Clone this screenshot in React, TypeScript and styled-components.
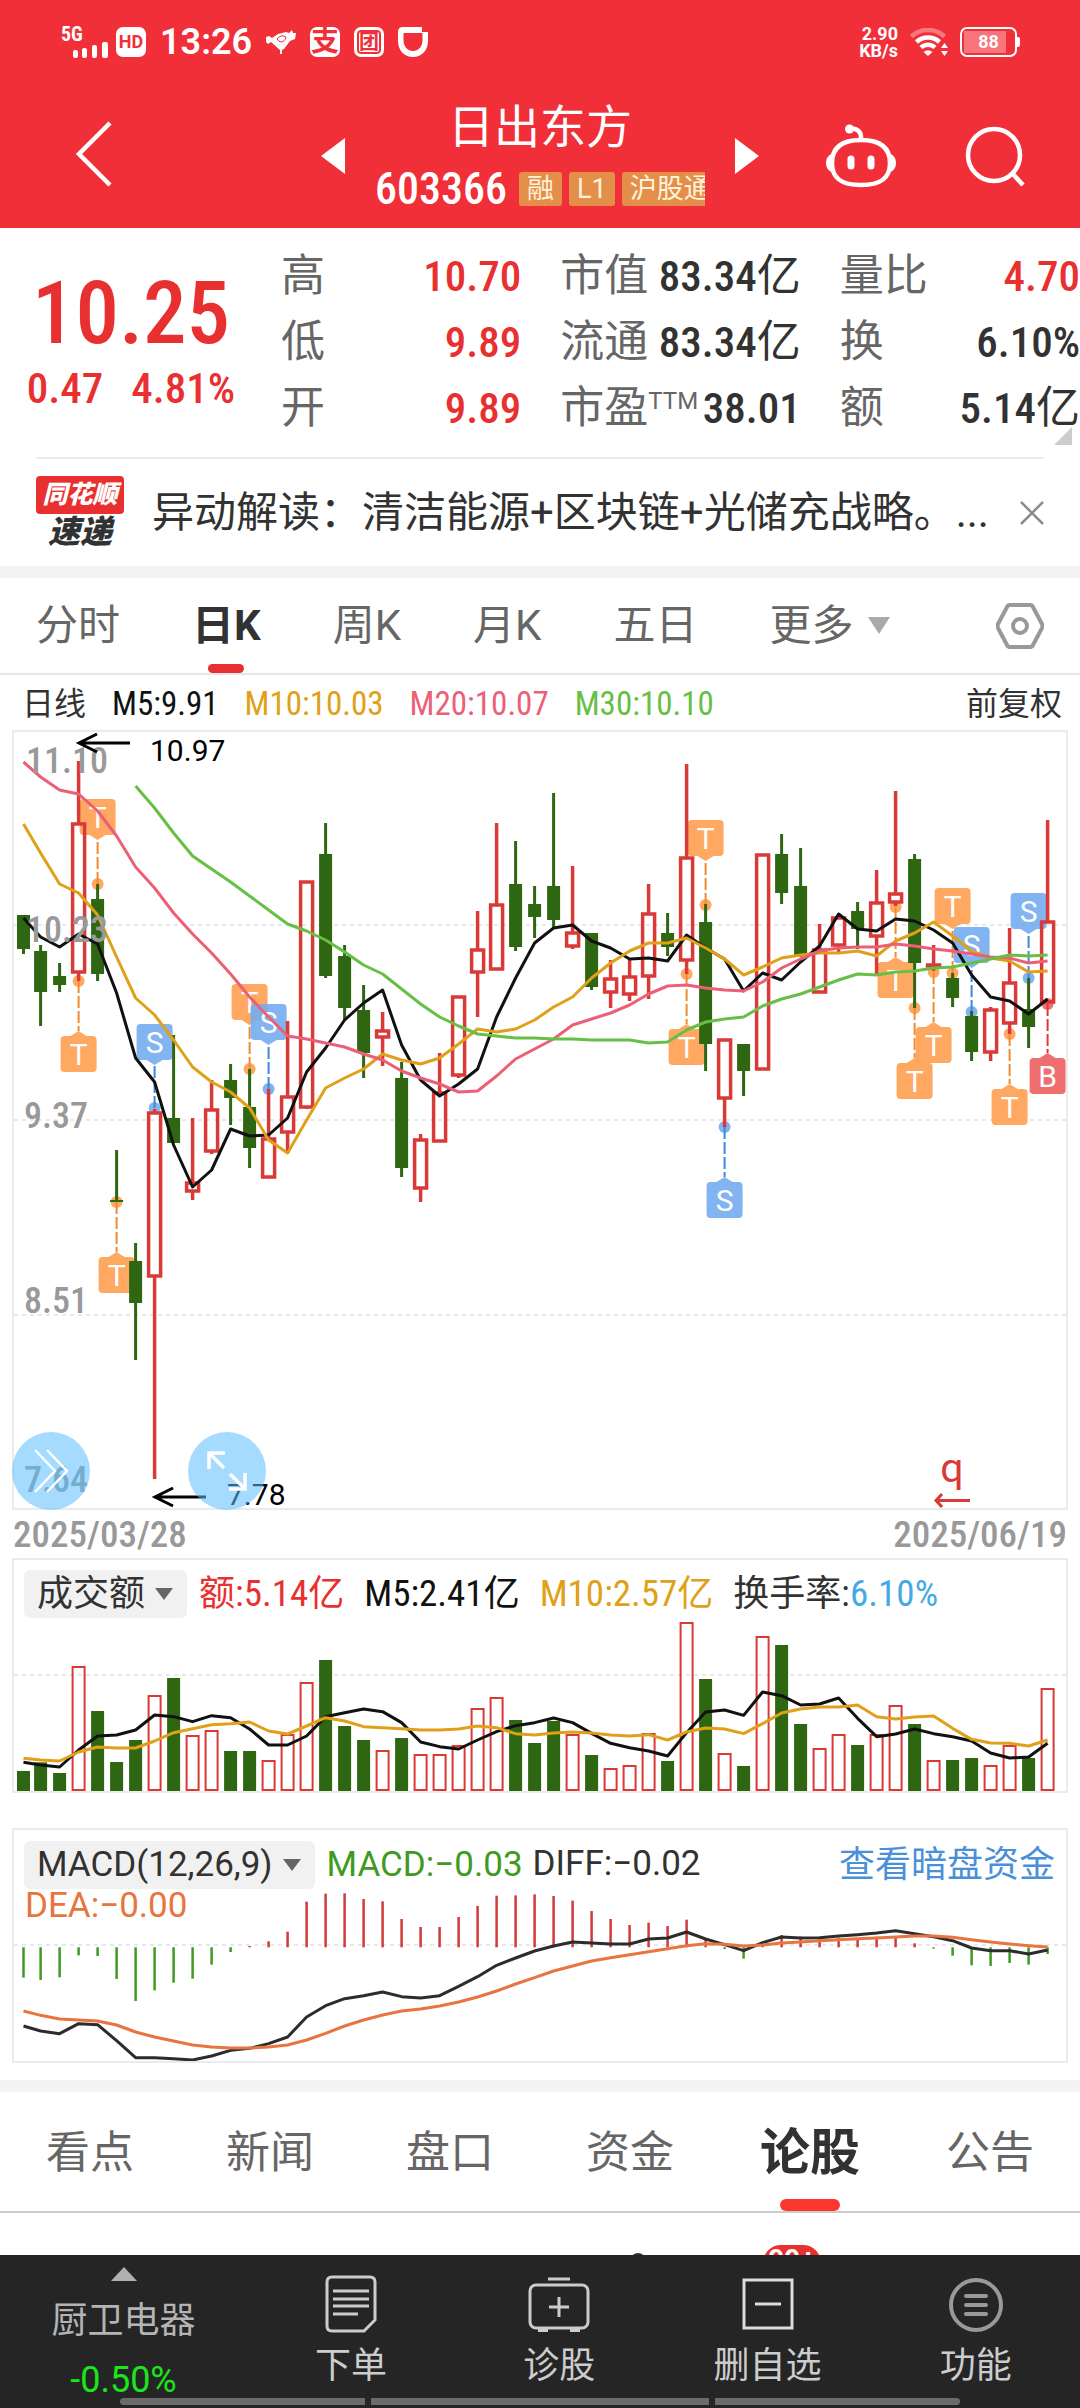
import React from "react";
import styled, { createGlobalStyle } from "styled-components";

const SANS = `Roboto, "Noto Sans CJK SC", sans-serif`;
const NUM = `"Roboto Condensed", Roboto, "Noto Sans CJK SC", sans-serif`;

const RED = "#e93030";
const INK = "#323232";
const GREY = "#666";
const UP = "#d93a38";
const DOWN = "#2f6612";

const GlobalStyle = createGlobalStyle`
  *, *::before, *::after { box-sizing: border-box; }
  body { margin: 0; background: #fff; font-family: ${SANS}; color: ${INK}; }
  button { border: 0; padding: 0; margin: 0; background: none; font: inherit; color: inherit; cursor: pointer; }
  h1, p, dl, dt, dd { margin: 0; font-weight: 400; }
  svg { display: block; }
`;

const Page = styled.div`
  display: flex;
  flex-direction: column;
  overflow: hidden;
`;

/* ---------- header ---------- */

const Header = styled.header`
  background: #f12f38;
  color: #fff;
`;

const StatusBar = styled.div`
  display: flex;
  justify-content: space-between;
  align-items: center;
  height: 84px;
  padding: 0 60px;
`;

const StatusGroup = styled.div<{ $gap: number }>`
  display: flex;
  align-items: center;
  gap: ${(p) => p.$gap}px;
`;

const Clock = styled.time`
  font-size: 36px;
  font-weight: 600;
  line-height: 40px;
`;

const Chip = styled.span<{ $size: number }>`
  display: flex;
  align-items: center;
  justify-content: center;
  width: 30px;
  height: 30px;
  border-radius: 7px;
  background: #fff;
  color: #f12f38;
  font-size: ${(p) => p.$size}px;
  font-weight: 700;
  line-height: 30px;
`;

const FrameChip = styled(Chip)`
  border: 3px solid #fff;
  box-shadow: inset 0 0 0 2px #f12f38;
`;

const Speed = styled.span`
  display: flex;
  flex-direction: column;
  align-items: flex-end;
  font-size: 18px;
  font-weight: 700;
  line-height: 17px;
`;

const Battery = styled.span`
  display: flex;
  align-items: center;
  justify-content: center;
  width: 57px;
  height: 30px;
  padding: 2px;
  border: 2px solid #fff;
  border-radius: 7px;
`;

const BatteryFill = styled.span`
  flex: 1;
  height: 100%;
  background: linear-gradient(to right, #f8767b 86%, transparent 86%);
  font-size: 18px;
  font-weight: 700;
  line-height: 22px;
  text-align: center;
`;

const BatteryTip = styled.span`
  width: 3px;
  height: 10px;
  border-radius: 0 2px 2px 0;
  background: #fff;
`;

const TitleBar = styled.div`
  display: grid;
  grid-template-columns: 1fr auto 1fr;
  align-items: center;
  height: 144px;
  padding: 0 55px 0 72px;
`;

const TitleActions = styled.div`
  display: flex;
  justify-content: flex-end;
  align-items: center;
  gap: 67px;
`;

const Switcher = styled.div`
  display: flex;
  align-items: center;
  gap: 30px;
  margin-right: 17px;
`;

const Title = styled.div`
  display: flex;
  flex-direction: column;
  align-items: center;
  gap: 6px;
  width: 330px;
`;

const Name = styled.h1`
  font-size: 46px;
  line-height: 60px;
`;

const CodeRow = styled.div`
  display: flex;
  align-items: center;
  align-self: stretch;
  gap: 7px;
  height: 52px;
  overflow: hidden;
`;

const Code = styled.span`
  margin-right: 5px;
  font-family: ${NUM};
  font-size: 44px;
  font-weight: 500;
  line-height: 52px;
`;

const Tag = styled.span`
  flex: none;
  padding: 0 8px;
  border-radius: 3px;
  background: #e38f4a;
  color: #fff3dc;
  font-size: 27px;
  line-height: 34px;
`;

/* ---------- quote ---------- */

const Quote = styled.section`
  position: relative;
  display: grid;
  grid-template-columns: 242px 1fr 1fr 1fr;
  column-gap: 39px;
  padding: 15px 0 16px;
`;

const PriceBlock = styled.div`
  display: flex;
  flex-direction: column;
  align-items: center;
  justify-content: center;
  padding-left: 20px;
  color: ${RED};
  font-family: ${NUM};
  font-weight: 500;
`;

const Price = styled.span`
  font-size: 87px;
  line-height: 92px;
`;

const Change = styled.span`
  display: flex;
  gap: 28px;
  font-size: 43px;
  line-height: 58px;
`;

const Stats = styled.dl``;

const Stat = styled.div`
  display: flex;
  justify-content: space-between;
  align-items: center;
  height: 66px;
  white-space: nowrap;
`;

const StatName = styled.dt`
  display: flex;
  color: ${GREY};
  font-size: 44px;
  line-height: 66px;
`;

const Sup = styled.span`
  font-size: 24px;
  line-height: 52px;
`;

const StatValue = styled.dd<{ $up?: boolean }>`
  color: ${(p) => (p.$up ? RED : INK)};
  font-family: ${NUM};
  font-size: 43px;
  font-weight: 500;
  line-height: 66px;
`;

const Unit = styled.span`
  font-size: 44px;
  font-weight: 400;
`;

const Corner = styled.span`
  position: absolute;
  right: 8px;
  bottom: 12px;
  border-bottom: 18px solid #ccc;
  border-left: 18px solid transparent;
`;

const News = styled.section`
  display: flex;
  align-items: center;
  height: 109px;
  margin: 0 36px;
  border-top: 2px solid #ececec;
`;

const Brand = styled.div`
  display: flex;
  flex-direction: column;
  align-items: center;
  flex: none;
  width: 88px;
  margin-right: 28px;
  font-style: italic;
  font-weight: 900;
`;

const BrandTop = styled.span`
  align-self: stretch;
  border-radius: 4px;
  background: ${RED};
  color: #fff;
  font-size: 25px;
  line-height: 38px;
  text-align: center;
`;

const BrandBottom = styled.span`
  font-size: 32px;
  line-height: 36px;
`;

const NewsText = styled.p`
  flex: 1;
  font-size: 42px;
  line-height: 60px;
  white-space: nowrap;
`;

const Band = styled.div`
  height: 12px;
  background: #f4f4f4;
`;

/* ---------- period tabs ---------- */

const PeriodTabs = styled.nav`
  display: flex;
  align-items: stretch;
  justify-content: space-between;
  height: 97px;
  padding: 0 36px;
  border-bottom: 2px solid #e6e6e6;
`;

const PeriodList = styled.div`
  display: flex;
  gap: 72px;
`;

const Period = styled.button<{ $active?: boolean }>`
  display: flex;
  align-items: center;
  gap: 15px;
  position: relative;
  color: ${(p) => (p.$active ? INK : GREY)};
  font-size: 42px;
  font-weight: ${(p) => (p.$active ? 700 : 400)};
  line-height: 60px;

  &::after {
    content: "";
    display: ${(p) => (p.$active ? "block" : "none")};
    position: absolute;
    left: calc(50% - 18px);
    bottom: 0;
    width: 36px;
    height: 9px;
    border-radius: 5px;
    background: ${RED};
  }
`;

const Caret = styled.span<{ $w: number; $h: number; $color: string }>`
  border-top: ${(p) => p.$h}px solid ${(p) => p.$color};
  border-left: ${(p) => p.$w / 2}px solid transparent;
  border-right: ${(p) => p.$w / 2}px solid transparent;
`;

/* ---------- charts ---------- */

const Averages = styled.div`
  display: flex;
  align-items: center;
  gap: 26px;
  height: 55px;
  padding: 2px 18px 0 22px;
  font-size: 32px;
  line-height: 40px;
`;

const Tone = styled.span<{ $color: string }>`
  color: ${(p) => p.$color};
`;

const Average = styled(Tone)`
  font-family: ${NUM};
  font-size: 33px;
`;

const PriceMode = styled.button`
  margin-left: auto;
`;

const Panel = styled.div`
  display: grid;
  margin: 0 12px;
  border: 2px solid #ebebeb;

  & > * { grid-area: 1 / 1; min-width: 0; }
`;

const Plot = styled.svg`
  width: 100%;
  height: auto;
`;

const AxisText = styled.text`
  fill: #999;
  font-family: ${NUM};
  font-size: 36px;
  font-weight: 500;
`;

const NoteText = styled.text`
  fill: #000;
  font-family: ${SANS};
  font-size: 30px;
`;

const MarkText = styled.text`
  fill: #fff;
  font-family: ${SANS};
  font-size: 30px;
  text-anchor: middle;
`;

const ExText = styled.text`
  fill: ${UP};
  font-family: ${SANS};
  font-size: 41px;
  text-anchor: middle;
`;

const FloatTools = styled.div`
  z-index: 1;
  align-self: end;
  justify-self: start;
  display: flex;
  gap: 98px;
  margin: 0 0 -2px -2px;
`;

const RoundButton = styled.button`
  display: flex;
  align-items: center;
  justify-content: center;
  width: 78px;
  height: 78px;
  border-radius: 50%;
  background: rgba(86, 188, 255, 0.54);
`;

const Dates = styled.div`
  display: flex;
  justify-content: space-between;
  height: 48px;
  padding: 0 13px;
  color: #999;
  font-family: ${NUM};
  font-size: 37px;
  font-weight: 500;
  line-height: 50px;
`;

const Legend = styled.div`
  z-index: 1;
  display: flex;
  align-self: start;
  align-items: center;
  flex-wrap: wrap;
  column-gap: 12px;
  padding: 10px 11px 0 10px;
  font-size: 36px;
  line-height: 48px;
`;

const Picker = styled.button`
  display: flex;
  align-items: center;
  gap: 10px;
  height: 48px;
  padding: 0 14px 0 13px;
  border-radius: 6px;
  background: #f1f1f1;
`;

const Readings = styled.div<{ $gap: number }>`
  display: flex;
  gap: ${(p) => p.$gap}px;
`;

const Num = styled.span`
  font-family: ${NUM};
  font-size: 37px;
`;

const LatinNum = styled.span`
  font-size: 35px;
`;

const DarkPoolLink = styled.a`
  margin-left: auto;
  color: #4a90d9;
  text-decoration: none;
`;

const SecondLine = styled.div`
  flex-basis: 100%;
  padding-left: 1px;
  line-height: 32px;
`;

const Gap = styled.div`
  height: 35px;
`;

const SmallGap = styled.div`
  height: 17px;
`;

/* ---------- content tabs ---------- */

const ContentTabs = styled.nav`
  display: grid;
  grid-template-columns: repeat(6, 1fr);
  height: 121px;
  border-bottom: 2px solid #ccc;
`;

const ContentTab = styled.button<{ $active?: boolean }>`
  position: relative;
  padding-top: 2px;
  color: ${(p) => (p.$active ? INK : GREY)};
  font-size: ${(p) => (p.$active ? 50 : 44)}px;
  font-weight: ${(p) => (p.$active ? 700 : 400)};
  line-height: 60px;

  &::after {
    content: "";
    display: ${(p) => (p.$active ? "block" : "none")};
    position: absolute;
    left: calc(50% - 30px);
    bottom: 0;
    width: 60px;
    height: 12px;
    border-radius: 6px;
    background: #fb3830;
  }
`;

const Peek = styled.div`
  display: flex;
  justify-content: flex-end;
  align-items: flex-start;
  gap: 117px;
  height: 42px;
  padding: 32px 259px 0 0;
  overflow: hidden;
`;

const PeekDot = styled.span`
  width: 16px;
  height: 16px;
  margin-top: 8px;
  border-radius: 50%;
  background: ${INK};
`;

const Badge = styled.span`
  width: 58px;
  height: 36px;
  border-radius: 18px;
  background: ${RED};
  color: #fff;
  font-size: 28px;
  font-weight: 700;
  line-height: 30px;
  text-align: center;
`;

const BottomBar = styled.nav`
  position: relative;
  display: grid;
  grid-template-columns: 247px repeat(4, 1fr);
  height: 153px;
  background: #252525;
  color: #ccc;
  font-size: 36px;
`;

const Sector = styled.button`
  display: flex;
  flex-direction: column;
  align-items: center;
  padding-top: 12px;
`;

const SectorName = styled.span`
  margin: 17px 0 13px;
  color: #b4b4b4;
  line-height: 46px;
`;

const SectorChange = styled.span`
  color: #1be61b;
  font-size: 36px;
  line-height: 46px;
`;

const Action = styled.button`
  display: flex;
  flex-direction: column;
  align-items: center;
  gap: 10px;
  padding-top: 20px;
  line-height: 46px;
`;

const Gesture = styled.div`
  position: absolute;
  left: 120px;
  right: 120px;
  bottom: 3px;
  display: grid;
  grid-template-columns: 245fr 338fr 245fr;
  gap: 6px;
  height: 7px;
  border-radius: 4px;
  overflow: hidden;
`;

const GestureBit = styled.span`
  background: #6b6b6b;
`;

/* ---------- chart data ---------- */

// [direction, high, open/close top, open/close bottom, low]
type Candle = ["u" | "d", number, number, number, number];

const candles: Candle[] = [
  ["d", 915, 915, 949, 954], ["d", 945, 951, 992, 1026], ["d", 963, 976, 985, 992],
  ["u", 761, 823, 972, 981], ["d", 884, 899, 974, 981], ["d", 1150, 1200, 1202, 1202],
  ["d", 1243, 1261, 1303, 1360], ["u", 1109, 1112, 1276, 1479], ["d", 1035, 1118, 1143, 1143],
  ["u", 1118, 1182, 1191, 1200], ["u", 1080, 1109, 1151, 1154], ["d", 1064, 1080, 1098, 1125],
  ["d", 1069, 1107, 1148, 1168], ["u", 1089, 1138, 1177, 1177], ["u", 1021, 1096, 1132, 1153],
  ["u", 881, 881, 1107, 1109], ["d", 823, 854, 976, 978], ["d", 945, 956, 1008, 1021],
  ["d", 985, 1010, 1053, 1078], ["u", 1012, 1030, 1037, 1066], ["d", 1062, 1078, 1168, 1177],
  ["u", 1134, 1139, 1188, 1202], ["u", 1053, 1092, 1141, 1141], ["u", 996, 996, 1075, 1078],
  ["u", 911, 949, 972, 1017], ["u", 823, 904, 969, 969], ["d", 841, 884, 947, 951],
  ["d", 886, 904, 917, 938], ["d", 793, 886, 920, 927], ["u", 866, 932, 946, 949],
  ["d", 933, 933, 987, 990], ["u", 960, 978, 992, 1008], ["u", 958, 976, 994, 1001],
  ["u", 884, 913, 976, 999], ["d", 913, 933, 947, 956], ["u", 764, 857, 960, 974],
  ["d", 904, 922, 1044, 1071], ["u", 1039, 1039, 1098, 1127], ["d", 1044, 1044, 1071, 1096],
  ["u", 854, 854, 1069, 1069], ["d", 834, 854, 893, 904], ["d", 848, 886, 955, 957],
  ["u", 924, 949, 992, 992], ["u", 914, 917, 945, 952], ["d", 902, 911, 929, 949],
  ["u", 870, 902, 936, 974], ["u", 791, 893, 902, 906], ["d", 854, 859, 963, 1008],
  ["u", 945, 964, 965, 971], ["d", 973, 978, 998, 1007], ["d", 1011, 1016, 1052, 1061],
  ["u", 1007, 1009, 1052, 1061], ["u", 928, 982, 1023, 1034], ["d", 978, 1009, 1027, 1048],
  ["u", 820, 921, 1002, 1002],
];

const ma5 = [918, 937, 947, 934, 944, 993, 1058, 1082, 1145, 1187, 1170, 1129, 1136, 1135, 1118, 1072, 1048, 1020, 1003, 990, 1045, 1080, 1096, 1084, 1069, 1017, 978, 943, 928, 925, 941, 948, 959, 958, 961, 935, 948, 959, 991, 973, 980, 962, 946, 914, 929, 931, 919, 921, 930, 943, 975, 997, 1001, 1014, 999];
const ma10 = [824, 853, 884, 893, 915, 957, 998, 1015, 1040, 1067, 1082, 1092, 1108, 1140, 1153, 1120, 1088, 1078, 1069, 1054, 1060, 1064, 1058, 1044, 1029, 1032, 1029, 1020, 1007, 997, 978, 963, 951, 943, 943, 938, 948, 959, 975, 967, 958, 955, 953, 953, 951, 956, 941, 933, 922, 936, 951, 958, 961, 972, 971];
const ma20 = [762, 777, 790, 794, 811, 836, 867, 888, 913, 934, 953, 974, 997, 1017, 1036, 1039, 1043, 1047, 1054, 1060, 1071, 1078, 1084, 1092, 1091, 1076, 1059, 1049, 1039, 1025, 1019, 1013, 1005, 994, 986, 985, 988, 990, 991, 982, 968, 959, 951, 948, 947, 947, 944, 946, 949, 951, 954, 957, 958, 963, 961];
const ma30 = [786, 808, 833, 856, 869, 882, 896, 910, 924, 931, 940, 952, 965, 974, 989, 1004, 1017, 1026, 1034, 1036, 1038, 1038, 1039, 1039, 1040, 1040, 1040, 1043, 1042, 1030, 1022, 1019, 1017, 1006, 999, 994, 987, 980, 974, 975, 972, 971, 968, 967, 963, 959, 955, 956, 955];

// Volume and MACD series are on a scale of three units to a pixel.
const volume = [663, 637, 669, 348, 483, 636, 570, 435, 384, 555, 540, 603, 603, 630, 552, 396, 330, 528, 570, 600, 564, 612, 612, 585, 474, 441, 510, 579, 513, 552, 615, 654, 645, 549, 633, 216, 387, 609, 648, 258, 285, 522, 594, 552, 585, 552, 465, 522, 630, 630, 624, 645, 585, 624, 414];
const vol5 = [637, 645, 651, 600, 558, 555, 540, 495, 500, 515, 497, 503, 537, 585, 585, 558, 500, 488, 477, 485, 518, 576, 590, 597, 570, 545, 527, 518, 504, 518, 550, 580, 593, 603, 618, 548, 486, 480, 496, 426, 437, 465, 462, 444, 505, 560, 552, 537, 551, 560, 573, 609, 624, 621, 580];
const vol10 = [625, 630, 633, 606, 591, 594, 594, 573, 548, 536, 524, 521, 516, 543, 552, 528, 503, 513, 530, 533, 536, 540, 540, 537, 528, 533, 551, 555, 549, 546, 549, 555, 558, 554, 570, 546, 534, 537, 551, 521, 489, 477, 471, 471, 465, 500, 507, 501, 498, 535, 568, 579, 580, 588, 570];
const macd = [473, 480, 472, 406, 408, 477, 543, 511, 488, 476, 434, 396, 378, 364, 335, 245, 221, 220, 237, 244, 297, 321, 321, 291, 258, 227, 226, 223, 228, 242, 273, 297, 315, 308, 318, 299, 357, 387, 416, 378, 345, 350, 352, 353, 355, 350, 352, 370, 386, 407, 436, 438, 429, 434, 402];
const diff = [618, 633, 641, 611, 614, 662, 713, 713, 716, 720, 708, 691, 685, 671, 651, 591, 557, 536, 527, 516, 530, 534, 527, 499, 470, 436, 414, 393, 378, 366, 369, 372, 372, 357, 354, 336, 357, 374, 392, 368, 351, 354, 353, 348, 344, 339, 332, 341, 350, 362, 384, 392, 392, 402, 390];
const dea = [573, 586, 597, 600, 603, 615, 636, 651, 663, 675, 681, 684, 684, 681, 675, 660, 640, 618, 600, 585, 573, 567, 558, 546, 531, 513, 492, 473, 453, 438, 423, 413, 404, 395, 386, 377, 371, 373, 378, 375, 369, 366, 362, 359, 356, 354, 351, 348, 348, 352, 359, 366, 372, 377, 381];

// [letter, candle index, top of the label, y of the dot]
type Mark = ["T" | "S" | "B", number, number, number];

const marks: Mark[] = [
  ["T", 4, 799, 884], ["T", 3, 1036, 981], ["S", 7, 1024, 1108], ["T", 5, 1257, 1202],
  ["T", 12, 984, 1069], ["S", 13, 1004, 1089], ["T", 36, 820, 905], ["T", 35, 1029, 974],
  ["S", 37, 1182, 1127], ["T", 46, 962, 907], ["T", 47, 1063, 1008], ["T", 48, 1027, 972],
  ["T", 49, 888, 973], ["S", 50, 927, 1012], ["T", 52, 1089, 1034], ["S", 53, 893, 978],
  ["B", 54, 1058, 1004],
];

const markFill = { T: "#ff9f50", S: "#74acf0", B: "#ee6062" };
const markLine = { T: "#f08a33", S: "#3f87d9", B: "#d93a38" };

const xAt = (i: number) => (i === 0 ? 23.5 : 21.6 + 19 * i);

const points = (ys: number[], from = 0, y = (v: number) => v) =>
  ys.map((v, i) => `${xAt(i + from)},${y(v)}`).join(" ");

const Line = ({ pts, color, width = 3 }: { pts: string; color: string; width?: number }) => (
  <polyline points={pts} fill="none" stroke={color} strokeWidth={width} strokeLinejoin="round" />
);

const GridLine = ({ y }: { y: number }) => (
  <line x1="14" x2="1066" y1={y} y2={y} stroke="#e9e9e9" strokeWidth="2" strokeDasharray="4 4" />
);

const MarkShape = ({ mark }: { mark: Mark }) => {
  const [letter, index, top, dot] = mark;
  const x = xAt(index);
  const below = top > dot;
  const edge = below ? top : top + 36;
  const tip = below ? top - 5 : top + 41;
  return (
    <g>
      <g opacity="0.9" fill={markFill[letter]}>
        <circle cx={x} cy={dot} r="6" />
        <rect x={x - 18} y={top} width="36" height="36" rx="4" />
        <path d={`M${x - 8} ${edge}L${x} ${tip}L${x + 8} ${edge}z`} />
      </g>
      <line x1={x} x2={x} y1={dot} y2={tip} stroke={markLine[letter]} strokeWidth="2" strokeDasharray="12 3" />
      <MarkText x={x} y={top + 29}>{letter}</MarkText>
    </g>
  );
};

const CandleShape = ({ candle, index }: { candle: Candle; index: number }) => {
  const [dir, high, top, bottom, low] = candle;
  const x = xAt(index);
  if (dir === "d") {
    return (
      <g fill={DOWN}>
        <rect x={x - 1.5} y={high} width="3" height={low - high} />
        <rect x={x - 6.5} y={top} width="13" height={bottom - top} />
      </g>
    );
  }
  return (
    <g stroke={UP} strokeWidth="3.500" fill="none">
      <path d={`M${x} ${high}V${top}M${x} ${bottom}V${low}`} />
      <rect x={x - 6} y={top + 1} width="12" height={Math.max(bottom - top - 1, 1)} />
    </g>
  );
};

const Arrow = ({ x, y }: { x: number; y: number }) => (
  <path d={`M${x + 51} ${y}H${x}M${x + 18} ${y - 9}L${x} ${y}L${x + 18} ${y + 9}`} fill="none" stroke="#000" strokeWidth="3" />
);

const KLineChart = () => (
  <Plot viewBox="14 732 1052 776" role="img" aria-label="日K线图">
    {[925, 1120, 1315].map((y) => <GridLine key={y} y={y} />)}
    {marks.map((m, i) => <MarkShape key={i} mark={m} />)}
    {candles.map((c, i) => <CandleShape key={i} candle={c} index={i} />)}
    <Line pts={points(ma5)} color="#111" />
    <Line pts={points(ma10)} color="#e0a019" />
    <Line pts={points(ma20)} color="#ec6077" />
    <Line pts={points(ma30, 6)} color="#67bf45" />
    <AxisText x="26" y="773">11.10</AxisText>
    <AxisText x="26" y="942">10.23</AxisText>
    <AxisText x="24" y="1128">9.37</AxisText>
    <AxisText x="24" y="1313">8.51</AxisText>
    <AxisText x="24" y="1492">7.64</AxisText>
    <Arrow x={79} y={743} />
    <NoteText x="150" y="761">10.97</NoteText>
    <Arrow x={155} y={1497} />
    <NoteText x="227" y="1505">7.78</NoteText>
    <ExText x="952" y="1482">q</ExText>
    <path d="M970 1500.500H936M942 1494L936 1500.500L942 1507" fill="none" stroke={UP} strokeWidth="3" />
  </Plot>
);

const volY = (v: number) => 1550 + v / 3;

const VolumeChart = () => (
  <Plot viewBox="14 1560 1052 231" role="img" aria-label="成交额">
    <GridLine y={1675} />
    {volume.map((v, i) => {
      const y = volY(v);
      return candles[i][0] === "d" ? (
        <rect key={i} x={xAt(i) - 6.5} y={y} width="13" height={1791 - y} fill={DOWN} />
      ) : (
        <rect key={i} x={xAt(i) - 6} y={y + 1} width="12" height={1789 - y} fill="none" stroke={UP} strokeWidth="2" />
      );
    })}
    <Line pts={points(vol5, 0, volY)} color="#111" />
    <Line pts={points(vol10, 0, volY)} color="#e0a019" />
  </Plot>
);

const macdY = (v: number) => 1820 + v / 3;

const MacdChart = () => (
  <Plot viewBox="14 1830 1052 231" role="img" aria-label="MACD">
    <GridLine y={1945} />
    {macd.map((v, i) => (
      <path key={i} d={`M${xAt(i)} 1947.300V${macdY(v)}`} stroke={v > 382 ? "#3f9a22" : "#d03a3a"} strokeWidth="2.500" />
    ))}
    <Line pts={points(diff, 0, macdY)} color="#2c2c2c" />
    <Line pts={points(dea, 0, macdY)} color="#e8743f" />
  </Plot>
);

/* ---------- icons ---------- */

const SignalIcon = () => (
  <svg width="49" height="38" viewBox="0 0 49 38" fill="#fff">
    <text x="1" y="18" fontSize="20" fontWeight="700" fontFamily="Roboto Condensed, Roboto, sans-serif">5G</text>
    <rect x="13" y="27" width="5" height="8" rx="2" />
    <rect x="22" y="25" width="5" height="10" rx="2" />
    <rect x="32" y="22" width="5" height="13" rx="2" />
    <rect x="42" y="19" width="6" height="16" rx="2" />
  </svg>
);

const BirdIcon = () => (
  <svg width="30" height="24" viewBox="0 0 30 24">
    <path d="M0 7L3 6L6 8L12 4L20 2L23 3L26 0L27 3L30 3L29 9L24 11L18 19L16 20V24H14V20L5 12L2 14L0 12z" fill="#fff" />
    <path d="M11 9q4 -5 9 -2q-1 5 -6 5z" fill="none" stroke="#f12f38" strokeWidth="1" />
  </svg>
);

const CupIcon = () => (
  <svg width="30" height="30" viewBox="0 0 30 30">
    <path d="M5 0H24V5H30V14C30 24 23 30 15 30C6 30 0 23 0 14V5Q0 0 5 0z" fill="#fff" />
    <path d="M5.500 6H24.500V13C24.500 20 20 24 15 24C9 24 5.500 19 5.500 13z" fill="#f12f38" />
  </svg>
);

const WifiIcon = () => (
  <svg width="38" height="29" viewBox="0 0 38 29" fill="none" stroke="#fff" strokeWidth="4.500">
    <path d="M1.500 8.500A24 24 0 0 1 34.500 8.500" opacity="0.35" />
    <path d="M6.500 14A17 17 0 0 1 29.500 14" />
    <path d="M11 19.500A10 10 0 0 1 25 19.500" />
    <path d="M18 28L13.500 24Q18 20.500 22.500 24z" fill="#fff" stroke="none" />
    <path d="M34.500 15L31 20H38zM34.500 28L31 23H38z" fill="#fff" stroke="none" />
  </svg>
);

const BackIcon = () => (
  <svg width="44" height="66" viewBox="0 0 44 66" fill="none" stroke="#fff" strokeWidth="4.500">
    <path d="M38 2L7 33L38 64" />
  </svg>
);

const Triangle = ({ dir }: { dir: "left" | "right" }) => (
  <svg width="24" height="36" viewBox="0 0 24 36" fill="#fff">
    <path d={dir === "left" ? "M24 0V36L0 18z" : "M0 0V36L24 18z"} />
  </svg>
);

const RobotIcon = () => (
  <svg width="70" height="66" viewBox="0 0 70 66" fill="none" stroke="#fff" strokeWidth="4.500">
    <path d="M35 17C54 17 64 24 64 40C64 56 54 62 35 62C16 62 6 56 6 40C6 24 16 17 35 17z" />
    <path d="M35 17Q36 5 24 5.500" />
    <circle cx="23.500" cy="6" r="4.500" fill="#fff" stroke="none" />
    <path d="M5 31Q0 34 0 40Q0 46 5 49zM65 31Q70 34 70 40Q70 46 65 49z" fill="#fff" stroke="none" />
    <path d="M25 36V43M45 36V43" strokeWidth="7" strokeLinecap="round" />
  </svg>
);

const SearchIcon = () => (
  <svg width="62" height="64" viewBox="0 0 62 64" fill="none" stroke="#fff" strokeWidth="4.500">
    <circle cx="31" cy="31" r="26" />
    <path d="M49 49L60 61" />
  </svg>
);

const CloseIcon = () => (
  <svg width="24" height="24" viewBox="0 0 24 24" fill="none" stroke="#8c8c8c" strokeWidth="2.500">
    <path d="M1 1L23 23M23 1L1 23" />
  </svg>
);

const HexIcon = () => (
  <svg width="48" height="46" viewBox="0 0 48 46" fill="none" stroke="#999" strokeWidth="4">
    <path d="M13 2H35Q36 2 37 4L46 21Q47 23 46 25L37 42Q36 44 35 44H13Q12 44 11 42L2 25Q1 23 2 21L11 4Q12 2 13 2z" />
    <circle cx="24" cy="23" r="7" />
  </svg>
);

const ChevronsIcon = () => (
  <svg width="34" height="44" viewBox="0 0 34 44" fill="none" stroke="#fff" strokeWidth="2.500">
    <path d="M1 1L21 22L1 43M13 1L33 22L13 43" />
  </svg>
);

const ExpandIcon = () => (
  <svg width="40" height="40" viewBox="0 0 40 40" fill="none" stroke="#fff" strokeWidth="3.500">
    <path d="M18 2H2V18M2 2L17 17M38 22V38H22M38 38L23 23" />
  </svg>
);

const OrderIcon = () => (
  <svg width="52" height="58" viewBox="0 0 52 58" fill="none" stroke="#ccc" strokeWidth="3">
    <path d="M7 2H45Q50 2 50 7V45L39 56H7Q2 56 2 51V7Q2 2 7 2z" />
    <path d="M8 16H44M8 24H44M8 31H44M8 39H33" />
  </svg>
);

const DiagnoseIcon = () => (
  <svg width="62" height="58" viewBox="0 0 62 58" fill="none" stroke="#ccc" strokeWidth="3">
    <rect x="2" y="10" width="58" height="43" rx="6" />
    <path d="M20 4H42M31 22V42M21 32H41" />
    <path d="M10 55H20M42 55H52" strokeWidth="4" />
  </svg>
);

const RemoveIcon = () => (
  <svg width="52" height="58" viewBox="0 0 52 58" fill="none" stroke="#ddd" strokeWidth="3">
    <rect x="2" y="5" width="48" height="48" />
    <path d="M13 29H39" />
  </svg>
);

const MenuIcon = () => (
  <svg width="56" height="58" viewBox="0 0 56 58" fill="none" stroke="#999" strokeWidth="4">
    <circle cx="28" cy="30" r="25" />
    <path d="M18 21H38M18 30H38M18 39H38" strokeLinecap="round" />
  </svg>
);

const UpIcon = () => (
  <svg width="26" height="14" viewBox="0 0 26 14" fill="#b0b0b0">
    <path d="M13 0L26 14H0z" />
  </svg>
);

/* ---------- page ---------- */

const Yi = () => <Unit>亿</Unit>;

export default function App() {
  return (
    <Page>
      <GlobalStyle />
      <Header>
        <StatusBar>
          <StatusGroup $gap={14}>
            <StatusGroup $gap={7}>
              <SignalIcon />
              <Chip $size={18}>HD</Chip>
            </StatusGroup>
            <Clock>13:26</Clock>
            <BirdIcon />
            <Chip $size={28}>支</Chip>
            <FrameChip $size={20}>团</FrameChip>
            <CupIcon />
          </StatusGroup>
          <StatusGroup $gap={12}>
            <Speed>
              <span>2.90</span>
              <span>KB/s</span>
            </Speed>
            <WifiIcon />
            <StatusGroup $gap={0}>
              <Battery><BatteryFill>88</BatteryFill></Battery>
              <BatteryTip />
            </StatusGroup>
          </StatusGroup>
        </StatusBar>
        <TitleBar>
          <div><button aria-label="返回"><BackIcon /></button></div>
          <Switcher>
            <button aria-label="上一只"><Triangle dir="left" /></button>
            <Title>
              <Name>日出东方</Name>
              <CodeRow>
                <Code>603366</Code>
                <Tag>融</Tag>
                <Tag>L1</Tag>
                <Tag>沪股通</Tag>
              </CodeRow>
            </Title>
            <button aria-label="下一只"><Triangle dir="right" /></button>
          </Switcher>
          <TitleActions>
            <button aria-label="助手"><RobotIcon /></button>
            <button aria-label="搜索"><SearchIcon /></button>
          </TitleActions>
        </TitleBar>
      </Header>

      <Quote>
        <PriceBlock>
          <Price>10.25</Price>
          <Change><span>0.47</span><span>4.81%</span></Change>
        </PriceBlock>
        <Stats>
          <Stat><StatName>高</StatName><StatValue $up>10.70</StatValue></Stat>
          <Stat><StatName>低</StatName><StatValue $up>9.89</StatValue></Stat>
          <Stat><StatName>开</StatName><StatValue $up>9.89</StatValue></Stat>
        </Stats>
        <Stats>
          <Stat><StatName>市值</StatName><StatValue>83.34<Yi /></StatValue></Stat>
          <Stat><StatName>流通</StatName><StatValue>83.34<Yi /></StatValue></Stat>
          <Stat><StatName>市盈<Sup>TTM</Sup></StatName><StatValue>38.01</StatValue></Stat>
        </Stats>
        <Stats>
          <Stat><StatName>量比</StatName><StatValue $up>4.70</StatValue></Stat>
          <Stat><StatName>换</StatName><StatValue>6.10%</StatValue></Stat>
          <Stat><StatName>额</StatName><StatValue>5.14<Yi /></StatValue></Stat>
        </Stats>
        <Corner />
      </Quote>

      <News>
        <Brand>
          <BrandTop>同花顺</BrandTop>
          <BrandBottom>速递</BrandBottom>
        </Brand>
        <NewsText>异动解读：清洁能源+区块链+光储充战略。...</NewsText>
        <button aria-label="关闭"><CloseIcon /></button>
      </News>
      <Band />

      <PeriodTabs>
        <PeriodList>
          <Period>分时</Period>
          <Period $active>日K</Period>
          <Period>周K</Period>
          <Period>月K</Period>
          <Period>五日</Period>
          <Period>更多<Caret $w={22} $h={17} $color="#aaa" /></Period>
        </PeriodList>
        <button aria-label="设置"><HexIcon /></button>
      </PeriodTabs>

      <Averages>
        <span>日线</span>
        <Average $color="#111">M5:9.91</Average>
        <Average $color="#e0a019">M10:10.03</Average>
        <Average $color="#ec6077">M20:10.07</Average>
        <Average $color="#67bf45">M30:10.10</Average>
        <PriceMode>前复权</PriceMode>
      </Averages>
      <Panel>
        <KLineChart />
        <FloatTools>
          <RoundButton aria-label="展开"><ChevronsIcon /></RoundButton>
          <RoundButton aria-label="全屏"><ExpandIcon /></RoundButton>
        </FloatTools>
      </Panel>
      <Dates><time>2025/03/28</time><time>2025/06/19</time></Dates>

      <Panel>
        <VolumeChart />
        <Legend>
          <Picker>成交额<Caret $w={18} $h={12} $color="#666" /></Picker>
          <Readings $gap={20}>
            <Tone $color={RED}>额<Num>:5.14</Num>亿</Tone>
            <Tone $color="#111"><Num>M5:2.41</Num>亿</Tone>
            <Tone $color="#e0a019"><Num>M10:2.57</Num>亿</Tone>
            <span>换手率:<Tone $color="#45a9e6"><Num>6.10%</Num></Tone></span>
          </Readings>
        </Legend>
      </Panel>
      <Gap />
      <Panel>
        <MacdChart />
        <Legend>
          <Picker><LatinNum>MACD(12,26,9)</LatinNum><Caret $w={18} $h={12} $color="#666" /></Picker>
          <Readings $gap={10}>
            <Tone $color="#3f9a22"><LatinNum>MACD:−0.03</LatinNum></Tone>
            <LatinNum>DIFF:−0.02</LatinNum>
          </Readings>
          <DarkPoolLink href="#">查看暗盘资金</DarkPoolLink>
          <SecondLine><Tone $color="#e8743f"><LatinNum>DEA:−0.00</LatinNum></Tone></SecondLine>
        </Legend>
      </Panel>
      <SmallGap />
      <Band />

      <ContentTabs>
        <ContentTab>看点</ContentTab>
        <ContentTab>新闻</ContentTab>
        <ContentTab>盘口</ContentTab>
        <ContentTab>资金</ContentTab>
        <ContentTab $active>论股</ContentTab>
        <ContentTab>公告</ContentTab>
      </ContentTabs>
      <Peek>
        <PeekDot />
        <Badge>99+</Badge>
      </Peek>

      <BottomBar>
        <Sector>
          <UpIcon />
          <SectorName>厨卫电器</SectorName>
          <SectorChange>-0.50%</SectorChange>
        </Sector>
        <Action><OrderIcon />下单</Action>
        <Action><DiagnoseIcon />诊股</Action>
        <Action><RemoveIcon />删自选</Action>
        <Action><MenuIcon />功能</Action>
        <Gesture><GestureBit /><GestureBit /><GestureBit /></Gesture>
      </BottomBar>
    </Page>
  );
}
